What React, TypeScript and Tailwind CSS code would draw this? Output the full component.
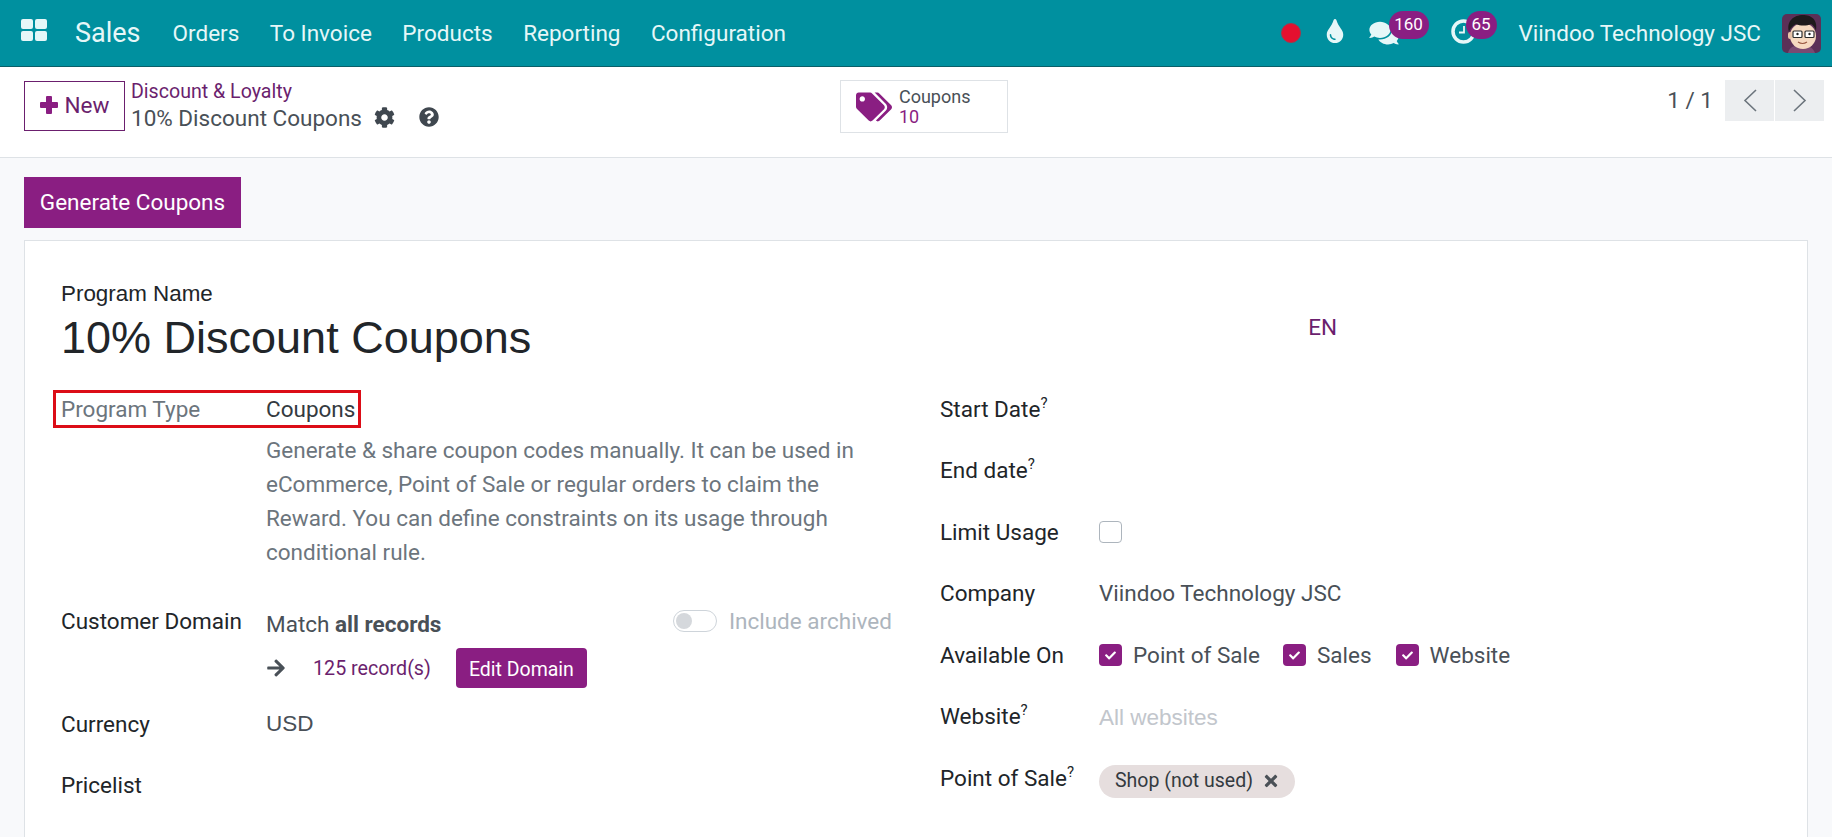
import { FaCog, FaQuestionCircle, FaTags, FaComments, FaTint, FaArrowRight, FaCheck, FaTimes } from 'react-icons/fa';

function AppsIcon() {
  return (
    <svg width="27" height="22" viewBox="0 0 27 22" fill="#e6f7f8">
      <rect x="0" y="0" width="12" height="10" rx="2" />
      <rect x="14" y="0" width="12" height="10" rx="2" />
      <rect x="0" y="12" width="12" height="10" rx="2" />
      <rect x="14" y="12" width="12" height="10" rx="2" />
    </svg>
  );
}

function Avatar() {
  return (
    <svg width="39" height="39" viewBox="0 0 39 39" className="rounded-[5px]">
      <rect width="39" height="39" fill="#5b3057" />
      <path d="M6 39c1-6 7-8 13-8s12 2 14 8z" fill="#7a4a72" />
      <ellipse cx="21" cy="22" rx="13" ry="13" fill="#f6d9c0" />
      <rect x="6" y="18" width="4" height="7" rx="2" fill="#e9c3a8" />
      <path d="M7 18C4 7 12 1 21 1c8 0 15 4 13 16-1-4-3-6-5-7-4 2-11 2-15 0-3 2-6 4-7 8z" fill="#1f1a1c" />
      <rect x="11" y="17" width="9" height="6.5" rx="1" fill="#fff" stroke="#2c2c2c" strokeWidth="1.2" />
      <rect x="23" y="17" width="9" height="6.5" rx="1" fill="#fff" stroke="#2c2c2c" strokeWidth="1.2" />
      <circle cx="15.5" cy="20" r="1.2" fill="#222" />
      <circle cx="27.5" cy="20" r="1.2" fill="#222" />
      <path d="M16 28c3 2 6 2 9 0" stroke="#9b5a44" strokeWidth="1.2" fill="none" />
    </svg>
  );
}

function Chevron({ dir }: { dir: 'left' | 'right' }) {
  return (
    <svg width="14" height="23" viewBox="0 0 14 23" fill="none" stroke="#6c757d" strokeWidth="1.6">
      <path d={dir === 'left' ? 'M13 1L2 11.5 13 22' : 'M1 1l11 10.5L1 22'} />
    </svg>
  );
}

function Row({ label, w, sup, children }: { label: string; w: string; sup?: boolean; children?: React.ReactNode }) {
  return (
    <div className="flex items-center h-[61.5px]">
      <div className={`${w} shrink-0 text-[#212529]`}>
        {label}
        {sup && <sup className="text-[15px] -top-[9px] text-[#212529]">?</sup>}
      </div>
      {children}
    </div>
  );
}

function Check({ label, mr }: { label: string; mr: string }) {
  return (
    <div className={`flex items-center ${mr}`}>
      <span className="w-[23px] h-[22px] rounded-[4px] bg-[#8a1e82] flex items-center justify-center">
        <FaCheck className="text-white text-[11px]" />
      </span>
      <span className="ml-[11px] text-[#495057]">{label}</span>
    </div>
  );
}

export default function App() {
  return (
    <div className="w-[1832px] h-[837px] overflow-hidden bg-[#f8f9fb] text-[22.5px] leading-none font-['Roboto',sans-serif] text-[#212529]">
      {/* navbar */}
      <nav className="h-[67px] bg-[#00909f] border-b border-[#0a5f68] flex items-center text-[#e6f7f8]">
        <div className="ml-[21px] mb-[6px]">
          <AppsIcon />
        </div>
        <span className="ml-[27px] text-[27px]">Sales</span>
        <div className="ml-[32px] flex gap-[30.5px] mt-[1px]">
          <span>Orders</span>
          <span>To Invoice</span>
          <span>Products</span>
          <span>Reporting</span>
          <span>Configuration</span>
        </div>
        <div className="ml-auto flex items-center">
          <span className="w-[20px] h-[20px] rounded-full bg-[#e4102f] border border-[#a8344a]" />
          <FaTint className="ml-[25px] w-[18px] h-[24px] text-[#e6f7f8] -mt-[4px]" />
          <div className="relative ml-[25px] w-[60px] h-[24px]">
            <FaComments className="w-[30px] h-[26px] -mt-[1px] text-[#e6f7f8]" />
            <span className="absolute -top-[10px] left-[20px] w-[40px] h-[28px] rounded-full bg-[#8a1e82] flex items-center justify-center text-[17px] text-white pb-[2px]">160</span>
          </div>
          <div className="relative ml-[22px] w-[46px] h-[24px]">
            <svg width="25" height="25" viewBox="0 0 25 25" fill="none" stroke="#e6f7f8" strokeWidth="3.5" className="-mt-[2px]">
              <circle cx="12.5" cy="12.5" r="10.5" />
              <path d="M13 7v6.5H8" strokeWidth="1.8" />
            </svg>
            <span className="absolute -top-[10px] left-[15px] w-[31px] h-[28px] rounded-full bg-[#8a1e82] flex items-center justify-center text-[17px] text-white pb-[2px]">65</span>
          </div>
          <span className="ml-[22px] mt-[1px]">Viindoo Technology JSC</span>
          <div className="ml-[21px] mr-[11px]">
            <Avatar />
          </div>
        </div>
      </nav>

      {/* control panel */}
      <div className="h-[91px] bg-white border-b border-[#dee2e6] flex items-start pt-[14px] pl-[24px] pr-[8px]">
        <button className="w-[101px] h-[50px] pb-[2px] border border-[#6b1f6e] flex items-center justify-center gap-[7px] text-[#6b1f6e]">
          <svg width="18" height="18" viewBox="0 0 18 18" fill="#8a1e82">
            <rect x="6" y="0" width="6" height="18" rx="1" />
            <rect x="0" y="6" width="18" height="6" rx="1" />
          </svg>
          New
        </button>
        <div className="ml-[6px]">
          <div className="text-[#6b1f6e] text-[19.6px] mt-[1px]">Discount &amp; Loyalty</div>
          <div className="flex items-center mt-[5px] text-[#495057]">
            10% Discount Coupons
            <FaCog className="ml-[12px] text-[21px] text-[#3f474f]" />
            <FaQuestionCircle className="ml-[24px] text-[20px] -mt-[2px] text-[#3f474f]" />
          </div>
        </div>
        <div className="ml-[401px] -mt-[1px] w-[168px] h-[53px] border border-[#dee2e6] flex items-center pl-[15px]">
          <FaTags className="text-[36px] text-[#8a1e82]" />
          <div className="ml-[7px] text-[18px] leading-[20px]">
            <div className="text-[#495057]">Coupons</div>
            <div className="text-[#8a1e82]">10</div>
          </div>
        </div>
        <div className="ml-auto flex items-start -mt-[1px]">
          <span className="mt-[9px] mr-[12px] text-[#495057]">1 / 1</span>
          <span className="w-[49px] h-[41px] bg-[#eceef0] flex items-center justify-center mr-[1px]">
            <Chevron dir="left" />
          </span>
          <span className="w-[49px] h-[41px] bg-[#eceef0] flex items-center justify-center">
            <Chevron dir="right" />
          </span>
        </div>
      </div>

      {/* page body */}
      <div className="px-[24px] pt-[19px]">
        <button className="w-[217px] h-[51px] bg-[#8a1e82] text-white">Generate Coupons</button>
        <div className="mt-[12px] h-[620px] w-[1784px] bg-white border border-[#dee2e6] pl-[36px] pt-[42px]">
          <div className="flex">
            <div className="font-['Liberation_Sans',sans-serif]">
              <div className="text-[22.4px]">Program Name</div>
              <div className="text-[45px] mt-[10px]">10% Discount Coupons</div>
            </div>
            <span className="ml-[777px] mt-[33px] text-[#6b1f6e]">EN</span>
          </div>

          <div className="flex mt-[30px]">
            {/* left column */}
            <div className="w-[879px]">
              <div className="relative flex items-center h-[38px]">
                <span className="absolute -left-[8px] top-0 w-[308px] h-[38px] border-[3px] border-[#dc0d17]" />
                <span className="w-[205px] text-[#6c757d]">Program Type</span>
                <span className="text-[#343a40]">Coupons</span>
              </div>
              <p className="ml-[205px] mt-[5px] w-[610px] text-[#6c757d] leading-[34px]">
                Generate &amp; share coupon codes manually. It can be used in eCommerce, Point of Sale or regular orders to claim the Reward. You can define constraints on its usage through conditional rule.
              </p>
              <div className="flex mt-[40px]">
                <div className="w-[205px] mt-[1px]">Customer Domain</div>
                <div className="w-[626px]">
                  <div className="flex items-center h-[24px] text-[#495057]">
                    <span className="mt-[5px]">Match <b className="font-bold">all records</b></span>
                    <span className="ml-auto w-[44px] h-[22px] rounded-full border border-[#ced4da] flex items-center pl-[2px]">
                      <span className="w-[16px] h-[16px] rounded-full bg-[#d5d8dc]" />
                    </span>
                    <span className="ml-[12px] text-[#adb5bd]">Include archived</span>
                  </div>
                  <div className="flex items-center mt-[15px]">
                    <FaArrowRight className="text-[20px] text-[#495057]" />
                    <span className="ml-[27px] text-[#6b1f6e] text-[19.7px]">125 record(s)</span>
                    <button className="ml-[25px] w-[131px] h-[40px] pt-[2px] rounded-[4px] bg-[#8a1e82] text-white text-[19.5px]">Edit Domain</button>
                  </div>
                </div>
              </div>
              <div className="mt-[5px]">
                <Row label="Currency" w="w-[205px]">
                  <span className="font-['Liberation_Sans',sans-serif] text-[#495057]">USD</span>
                </Row>
                <Row label="Pricelist" w="w-[205px]" />
              </div>
            </div>

            {/* right column */}
            <div className="-mt-[12px]">
              <Row label="Start Date" w="w-[159px]" sup />
              <Row label="End date" w="w-[159px]" sup />
              <Row label="Limit Usage" w="w-[159px]">
                <span className="w-[23px] h-[22px] rounded-[4px] border border-[#adb5bd] bg-white" />
              </Row>
              <Row label="Company" w="w-[159px]">
                <span className="text-[#495057]">Viindoo Technology JSC</span>
              </Row>
              <Row label="Available On" w="w-[159px]">
                <Check label="Point of Sale" mr="mr-[23px]" />
                <Check label="Sales" mr="mr-[24px]" />
                <Check label="Website" mr="" />
              </Row>
              <Row label="Website" w="w-[159px]" sup>
                <span className="mt-[3px] font-['Liberation_Sans',sans-serif] text-[#c2c6cc]">All websites</span>
              </Row>
              <Row label="Point of Sale" w="w-[159px]" sup>
                <span className="mt-[6px] h-[33px] w-[196px] rounded-full bg-[#e6dede] flex items-center pl-[16px] text-[19.5px] text-[#343a40]">
                  Shop (not used)
                  <FaTimes className="ml-[9px] text-[18px] text-[#4b5157]" />
                </span>
              </Row>
            </div>
          </div>
        </div>
      </div>
    </div>
  );
}
